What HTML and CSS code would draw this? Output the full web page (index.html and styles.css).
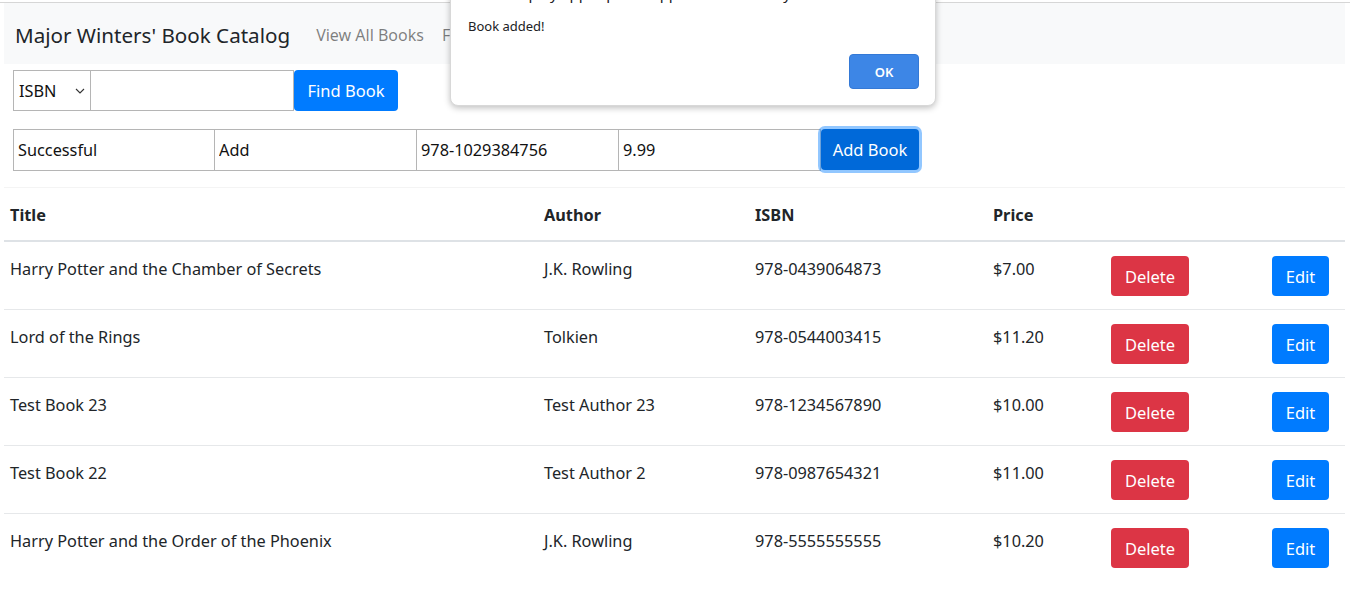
FILE: index.html
```html
<!DOCTYPE html>
<html>
<head>
<meta charset="utf-8">
<link rel="stylesheet" href="styles.css">
</head>
<body>
<div class="topline"></div>
<div class="page">
  <nav class="navbar">
    <span class="brand">Major Winters' Book Catalog</span>
    <a class="navlink">View All Books</a>
    <a class="navlink">Find a Book</a>
  </nav>
  <div class="search-row">
    <div class="select">ISBN<svg class="chev" width="10" height="6" viewBox="0 0 10 6"><path d="M1 1l4 4 4-4" fill="none" stroke="#333" stroke-width="1.1"/></svg></div>
    <input class="search-input" type="text">
    <button class="btn btn-primary btn-find">Find Book</button>
  </div>
  <div class="add-row">
    <input class="add-input" type="text" value="Successful">
    <input class="add-input" type="text" value="Add">
    <input class="add-input" type="text" value="978-1029384756">
    <input class="add-input" type="text" value="9.99">
    <button class="btn btn-add">Add Book</button>
  </div>
  <table class="table">
    <colgroup>
      <col class="c1"><col class="c2"><col class="c3"><col class="c4"><col class="c5"><col class="c6">
    </colgroup>
    <thead>
      <tr><th>Title</th><th>Author</th><th>ISBN</th><th>Price</th><th></th><th></th></tr>
    </thead>
    <tbody>
      <tr><td>Harry Potter and the Chamber of Secrets</td><td>J.K. Rowling</td><td>978-0439064873</td><td>$7.00</td><td><button class="btn btn-danger">Delete</button></td><td><button class="btn btn-primary btn-edit">Edit</button></td></tr>
      <tr><td>Lord of the Rings</td><td>Tolkien</td><td>978-0544003415</td><td>$11.20</td><td><button class="btn btn-danger">Delete</button></td><td><button class="btn btn-primary btn-edit">Edit</button></td></tr>
      <tr><td>Test Book 23</td><td>Test Author 23</td><td>978-1234567890</td><td>$10.00</td><td><button class="btn btn-danger">Delete</button></td><td><button class="btn btn-primary btn-edit">Edit</button></td></tr>
      <tr><td>Test Book 22</td><td>Test Author 2</td><td>978-0987654321</td><td>$11.00</td><td><button class="btn btn-danger">Delete</button></td><td><button class="btn btn-primary btn-edit">Edit</button></td></tr>
      <tr><td>Harry Potter and the Order of the Phoenix</td><td>J.K. Rowling</td><td>978-5555555555</td><td>$10.20</td><td><button class="btn btn-danger">Delete</button></td><td><button class="btn btn-primary btn-edit">Edit</button></td></tr>
    </tbody>
  </table>
</div>
<div class="dialog">
  <div class="dialog-title">book-display.app reports: applied successfully</div>
  <div class="dialog-msg">Book added!</div>
  <div class="dialog-actions"><button class="ok-btn">OK</button></div>
</div>
</body>
</html>
```
FILE: styles.css
```css
html, body {
  margin: 0;
  padding: 0;
  background: #fff;
}
body {
  font-family: "Noto Sans", "Open Sans", sans-serif;
  font-size: 16.3px;
  color: #212529;
  position: relative;
}
.topline {
  height: 1px;
  margin-top: 2px;
  background: #d6d6d6;
}
.page {
  padding: 0 5px 0 4px;
}
.navbar {
  height: 61px;
  box-sizing: border-box;
  background: #f8f9fa;
  display: flex;
  align-items: center;
  padding: 3px 0 0 11px;
}
.brand {
  font-size: 20.6px;
  color: #212529;
  margin-right: 26px;
}
.navlink {
  font-size: 16px;
  color: rgba(0,0,0,0.5);
  margin-right: 18px;
}
.search-row {
  display: flex;
  margin: 6px 0 0 9px;
  height: 41px;
}
.select {
  width: 78px;
  box-sizing: border-box;
  border: 1px solid #b5b5b5;
  display: flex;
  align-items: center;
  justify-content: space-between;
  padding: 0 5px 0 5px;
  font-size: 16.3px;
  color: #111;
}
.chev { margin-top: 1px; }
.search-input {
  width: 203px;
  box-sizing: border-box;
  border: 1px solid #b5b5b5;
  border-left: none;
  margin: 0;
  height: 41px;
  font-family: inherit;
}
.btn {
  font-family: inherit;
  font-size: 16.5px;
  border: none;
  border-radius: 4px;
  color: #fff;
  margin: 0;
  cursor: pointer;
}
.btn-primary { background: #007bff; }
.btn-danger { background: #dc3545; }
.btn-find {
  width: 104px;
  height: 41px;
  padding: 0;
}
.add-row {
  display: flex;
  align-items: center;
  margin: 17px 0 0 9px;
  height: 43px;
}
.add-input {
  width: 202px;
  height: 42px;
  box-sizing: border-box;
  border: 1px solid #b5b5b5;
  border-left-width: 0;
  margin: 0;
  padding: 0 4px;
  font-family: inherit;
  font-size: 16.3px;
  color: #111;
  background: #fff;
}
.add-input:first-child { border-left-width: 1px; }
.btn-add {
  width: 98px;
  height: 41px;
  padding: 0;
  background: #0069d9;
  box-shadow: 0 0 0 3px rgba(38,143,255,0.5);
  border-radius: 4px;
}
.table {
  width: 100%;
  border-collapse: collapse;
  table-layout: fixed;
  margin-top: 16px;
  border-top: 1px solid #f4f4f4;
}
.c1 { width: 534px; }
.c2 { width: 211px; }
.c3 { width: 238px; }
.c4 { width: 118px; }
.c5 { width: 161px; }
.c6 { width: 79px; }
th {
  text-align: left;
  font-weight: 700;
  padding: 14px 6px 12px;
  line-height: 26px;
  border-bottom: 2px solid #dee2e6;
}
td {
  padding: 14px 6px 13px;
  line-height: 26px;
  vertical-align: top;
  border-top: 1px solid #e6e8ea;
}
tbody tr:first-child td { border-top: none; }
.btn-danger, .btn-edit {
  height: 40px;
  padding: 0;
  display: block;
}
.btn-danger { width: 78px; }
.btn-edit { width: 57px; }

.dialog {
  position: absolute;
  left: 450px;
  top: -30px;
  width: 486px;
  height: 136px;
  box-sizing: border-box;
  background: #fff;
  border: 1px solid #d8d8d8;
  border-radius: 8px;
  box-shadow: 0 2px 6px rgba(0,0,0,0.25);
  font-family: "Noto Sans", sans-serif;
  padding: 0 16px 0 17px;
}
.dialog-title {
  font-size: 15px;
  color: #202124;
  line-height: 20px;
  margin-top: 12px;
}
.dialog-msg {
  font-size: 13px;
  color: #202124;
  margin-top: 14px;
  line-height: 18px;
}
.dialog-actions {
  display: flex;
  justify-content: flex-end;
  margin-top: 19px;
}
.ok-btn {
  width: 70px;
  height: 35px;
  background: #3d86e6;
  color: #fff;
  border: 1px solid #3479d6;
  border-radius: 4px;
  font-family: inherit;
  font-size: 13px;
  font-weight: 600;
}
```
